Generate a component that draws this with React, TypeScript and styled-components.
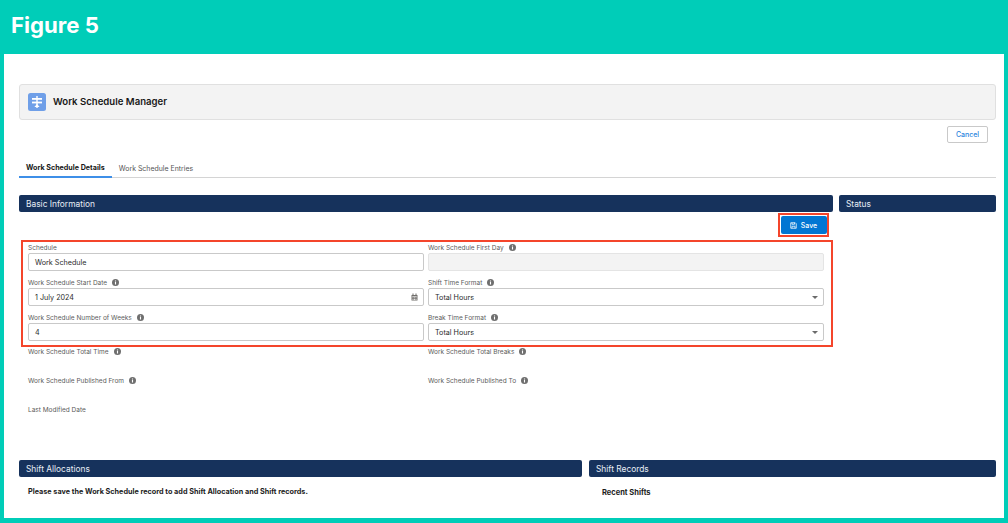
import React from "react";
import styled, { createGlobalStyle } from "styled-components";

const Global = createGlobalStyle`
  html, body { margin: 0; padding: 0; background: #00cdb8; }
  body { font-family: Inter, "Liberation Sans", sans-serif; -webkit-font-smoothing: antialiased; }
  * { box-sizing: border-box; }
`;

const Page = styled.div`
  width: 1008px;
  height: 523px;
  background: #00cdb8;
  display: flex;
  flex-direction: column;
  overflow: hidden;
`;
const Banner = styled.header`
  height: 54px;
  flex: none;
  padding: 0 0 5px 11px;
  display: flex;
  align-items: center;
  color: #fff;
  font-size: 22.2px;
  font-weight: 700;
`;
const Sheet = styled.main`
  height: 464px;
  flex: none;
  margin: 0 4px;
  background: #fff;
  padding: 30px 8px 0 15px;
`;
const TitleCard = styled.div`
  height: 36px;
  background: #f3f3f3;
  border: 1px solid #e0e0e0;
  border-radius: 3px;
  display: flex;
  align-items: center;
  gap: 7px;
  padding: 0 0 0 8px;
`;
const Logo = styled.svg`
  width: 18px;
  height: 18px;
  flex: none;
`;
const Title = styled.h1`
  margin: 0 0 2px;
  font-size: 9.6px;
  font-weight: 600;
  color: #181818;
`;
const ActionRow = styled.div`
  display: flex;
  justify-content: flex-end;
  margin-top: 6px;
  padding-right: 8px;
`;
const CancelButton = styled.button`
  width: 41px;
  height: 17px;
  padding: 0;
  background: #fff;
  border: 1px solid #c9c9c9;
  border-radius: 2px;
  color: #2e86de;
  font: 500 7px Inter, sans-serif;
`;
const TabBar = styled.nav`
  display: flex;
  height: 18px;
  margin-top: 17px;
  border-bottom: 1px solid #d4d4d4;
`;
const Tab = styled.div<{ $active?: boolean }>`
  height: 18px;
  padding: 0 7px;
  display: flex;
  align-items: center;
  padding-bottom: 2px;
  font-size: ${(p) => (p.$active ? "7.15px" : "6.95px")};
  font-weight: ${(p) => (p.$active ? 700 : 400)};
  color: ${(p) => (p.$active ? "#181818" : "#555")};
  border-bottom: ${(p) => (p.$active ? "2px solid #3d8fe8" : "none")};
`;
const TopGrid = styled.section`
  display: grid;
  grid-template-columns: 814px 157px;
  gap: 6px;
  margin-top: 17px;
`;
const BottomGrid = styled.section`
  display: grid;
  grid-template-columns: 563px 407px;
  gap: 7px;
  margin-top: 45px;
`;
const SectionBar = styled.h2`
  margin: 0;
  height: 17px;
  padding: 0 7px;
  display: flex;
  align-items: center;
  background: #16325c;
  border-radius: 2px;
  color: #e6edf5;
  font-size: 8.4px;
  font-weight: 400;
`;
const SaveRow = styled.div`
  display: flex;
  justify-content: flex-end;
  padding-right: 4px;
  margin-top: 1px;
`;
const SaveHighlight = styled.div`
  width: 51px;
  height: 24px;
  border: 2px solid #f4452b;
  display: flex;
  align-items: center;
  justify-content: center;
`;
const SaveButton = styled.button`
  width: 46px;
  height: 18px;
  padding: 0;
  background: #0176d3;
  border: none;
  border-radius: 2px;
  color: #fff;
  font: 500 7px Inter, sans-serif;
  display: flex;
  align-items: center;
  justify-content: center;
  gap: 4px;
`;
const EditBox = styled.div`
  margin: 3px 0 0 2px;
  border: 2px solid #f4452b;
  height: 107px;
  padding: 0 6px 0 5px;
  display: grid;
  grid-template-columns: 396px 396px;
  column-gap: 4px;
  row-gap: 6px;
  align-content: start;
`;
const ReadGrid = styled.div`
  display: grid;
  grid-template-columns: 396px 396px;
  column-gap: 4px;
  row-gap: 18px;
  padding-left: 9px;
  margin-top: -1px;
`;
const Field = styled.div`
  min-width: 0;
`;
const Label = styled.div`
  height: 11px;
  display: flex;
  align-items: center;
  gap: 5px;
  font-size: 6.5px;
  color: #5c5c5c;
  white-space: nowrap;
`;
const InfoIcon = styled.svg`
  width: 7px;
  height: 7px;
  flex: none;
`;
const Control = styled.div<{ $disabled?: boolean }>`
  height: 18px;
  display: flex;
  align-items: center;
  justify-content: space-between;
  padding: 0 5px 0 6px;
  background: ${(p) => (p.$disabled ? "#f3f3f3" : "#fff")};
  border: 1px solid ${(p) => (p.$disabled ? "#e4e4e4" : "#c9c9c9")};
  border-radius: 2px;
  font-size: 7.2px;
  color: #2b2b2b;
`;
const Caret = styled.span`
  width: 0;
  height: 0;
  border-left: 3px solid transparent;
  border-right: 3px solid transparent;
  border-top: 3.5px solid #6b6b6b;
`;
const CalIcon = styled.svg`
  width: 7px;
  height: 8px;
`;
const Notice = styled.p`
  margin: 10px 0 0 9px;
  font-size: 7.25px;
  font-weight: 700;
  color: #1c1c1c;
  line-height: 10px;
`;
const RecentShifts = styled.p`
  margin: 11px 0 0 13px;
  font-size: 7.5px;
  font-weight: 700;
  color: #1c1c1c;
  line-height: 10px;
`;

const Info = () => (
  <InfoIcon viewBox="0 0 14 14">
    <circle cx="7" cy="7" r="7" fill="#6f6f6f" />
    <rect x="5.9" y="6" width="2.2" height="5" fill="#fff" />
    <rect x="5.9" y="3" width="2.2" height="2" fill="#fff" />
  </InfoIcon>
);

const LabelText = ({ text, info = true }: { text: string; info?: boolean }) => (
  <Label>
    {text}
    {info && <Info />}
  </Label>
);

export default function App() {
  return (
    <Page>
      <Global />
      <Banner>Figure 5</Banner>
      <Sheet>
        <TitleCard>
          <Logo viewBox="0 0 18 18">
            <rect width="18" height="18" rx="2.5" fill="#6f9fe8" />
            <rect x="8.3" y="3" width="1.4" height="12" fill="#fff" />
            <rect x="4" y="5" width="10" height="1.8" fill="#fff" />
            <rect x="4" y="8.6" width="10" height="1.8" fill="#fff" />
            <path d="M9 11l2.6 3H6.4z" fill="#fff" />
          </Logo>
          <Title>Work Schedule Manager</Title>
        </TitleCard>
        <ActionRow>
          <CancelButton>Cancel</CancelButton>
        </ActionRow>
        <TabBar>
          <Tab $active>Work Schedule Details</Tab>
          <Tab>Work Schedule Entries</Tab>
        </TabBar>
        <TopGrid>
          <div>
            <SectionBar>Basic Information</SectionBar>
            <SaveRow>
              <SaveHighlight>
                <SaveButton>
                  <svg width="7" height="7" viewBox="0 0 14 14" fill="none" stroke="#fff" strokeWidth="1.5">
                    <path d="M1.5 1.5h9l2 2v9h-11z" />
                    <path d="M4 1.5v3h5v-3M4 12.5v-4h6v4" />
                  </svg>
                  Save
                </SaveButton>
              </SaveHighlight>
            </SaveRow>
            <EditBox>
              <Field>
                <LabelText text="Schedule" info={false} />
                <Control>Work Schedule</Control>
              </Field>
              <Field>
                <LabelText text="Work Schedule First Day" />
                <Control $disabled />
              </Field>
              <Field>
                <LabelText text="Work Schedule Start Date" />
                <Control>
                  1 July 2024
                  <CalIcon viewBox="0 0 14 16">
                    <path d="M1 4h12v11H1z" fill="#706e6b" />
                    <rect x="3" y="1" width="2" height="3" fill="#706e6b" />
                    <rect x="9" y="1" width="2" height="3" fill="#706e6b" />
                    <rect x="2.5" y="6" width="9" height="1.2" fill="#fff" />
                    <rect x="3" y="9" width="2" height="1.6" fill="#fff" />
                    <rect x="6" y="9" width="2" height="1.6" fill="#fff" />
                    <rect x="9" y="9" width="2" height="1.6" fill="#fff" />
                    <rect x="3" y="12" width="2" height="1.6" fill="#fff" />
                    <rect x="6" y="12" width="2" height="1.6" fill="#fff" />
                    <rect x="9" y="12" width="2" height="1.6" fill="#fff" />
                  </CalIcon>
                </Control>
              </Field>
              <Field>
                <LabelText text="Shift Time Format" />
                <Control>
                  Total Hours
                  <Caret />
                </Control>
              </Field>
              <Field>
                <LabelText text="Work Schedule Number of Weeks" />
                <Control>4</Control>
              </Field>
              <Field>
                <LabelText text="Break Time Format" />
                <Control>
                  Total Hours
                  <Caret />
                </Control>
              </Field>
            </EditBox>
            <ReadGrid>
              <LabelText text="Work Schedule Total Time" />
              <LabelText text="Work Schedule Total Breaks" />
              <LabelText text="Work Schedule Published From" />
              <LabelText text="Work Schedule Published To" />
              <LabelText text="Last Modified Date" info={false} />
            </ReadGrid>
          </div>
          <div>
            <SectionBar>Status</SectionBar>
          </div>
        </TopGrid>
        <BottomGrid>
          <div>
            <SectionBar>Shift Allocations</SectionBar>
            <Notice>Please save the Work Schedule record to add Shift Allocation and Shift records.</Notice>
          </div>
          <div>
            <SectionBar>Shift Records</SectionBar>
            <RecentShifts>Recent Shifts</RecentShifts>
          </div>
        </BottomGrid>
      </Sheet>
    </Page>
  );
}
